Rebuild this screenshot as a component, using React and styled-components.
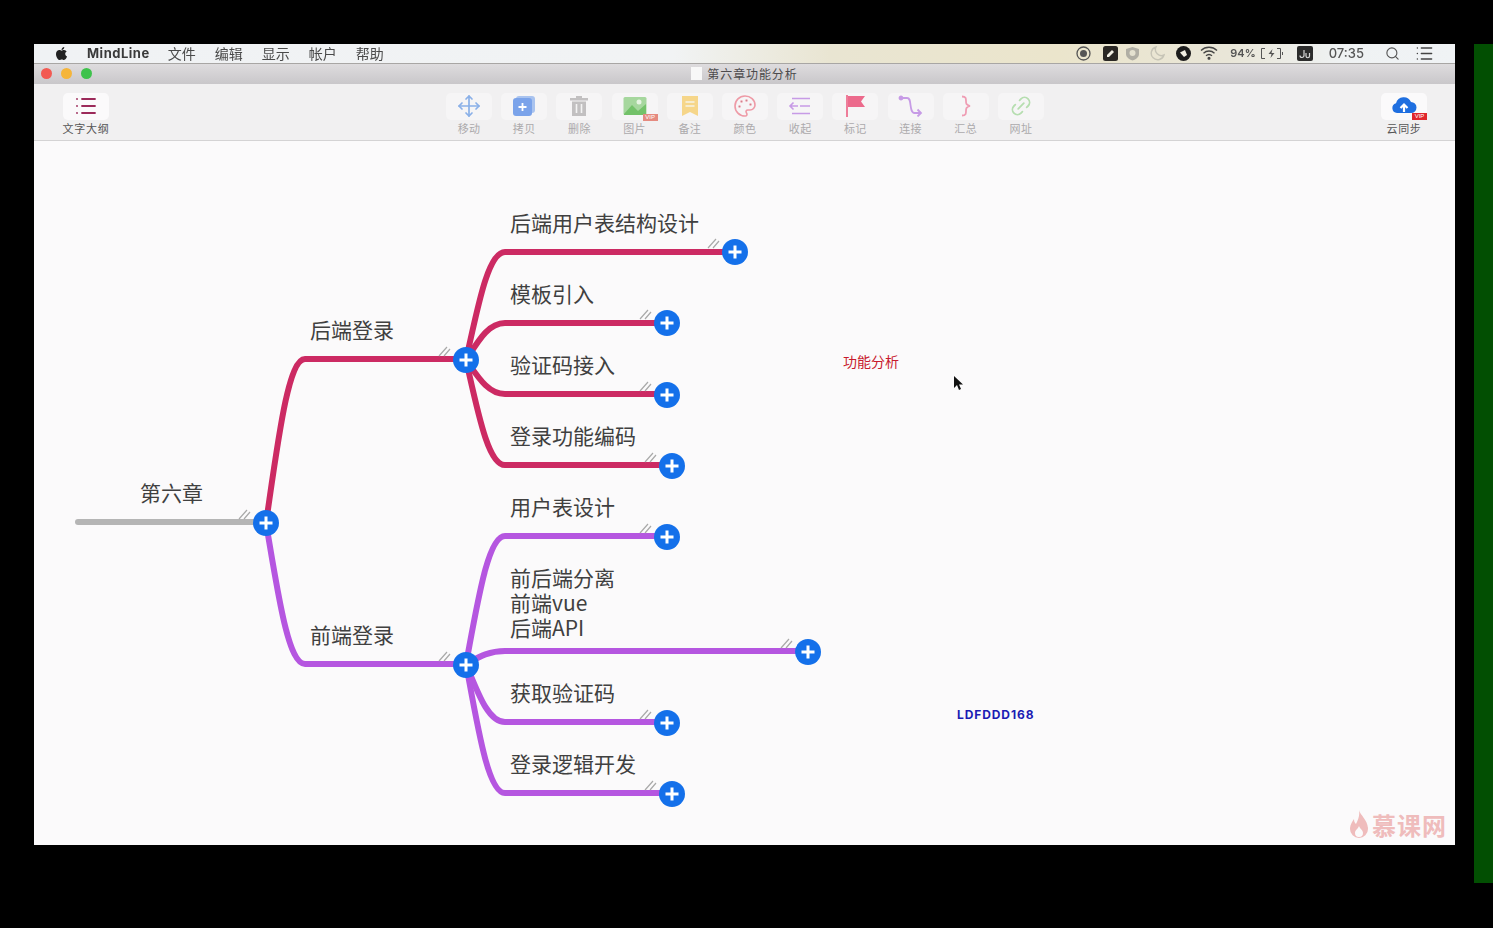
import styled, { createGlobalStyle } from "styled-components";
import { FaApple } from "react-icons/fa";
import { List, Move, Palette, Link2, Search } from "lucide-react";

const GlobalStyle = createGlobalStyle`
    html, body {
        margin: 0;
        height: 100%;
        background: #000;
        overflow: hidden;
    }
    body {
        font-family: "Noto Sans CJK SC", "Noto Sans", sans-serif;
    }
`;

const Screen = styled.div`
    display: flex;
    align-items: flex-start;
    padding: 44px 0 0 34px;
    height: 928px;
    box-sizing: border-box;
`;

const Window = styled.div`
    width: 1421px;
    height: 801px;
    display: flex;
    flex-direction: column;
    filter: blur(0.6px);
`;

const GreenBar = styled.div`
    width: 19px;
    height: 839px;
    margin-left: 19px;
    background: #024f02;
`;

const MenuBar = styled.div`
    height: 20px;
    flex: none;
    display: flex;
    align-items: center;
    padding: 0 0 1px 20px;
    background: linear-gradient(90deg, #f0f2f4 0%, #f1f3f4 45%, #e9e5d2 56%, #ebe5cc 72%, #e9e6d8 84%, #eff2f3 92%, #f0f3f5 100%);
    border-bottom: 1px solid #a8a6a4;
    box-sizing: border-box;
`;

const AppleMark = styled(FaApple)`
    font-size: 15px;
    color: #222;
    margin-right: 18px;
`;

const AppName = styled.span`
    font-family: Inter, "Noto Sans", sans-serif;
    font-size: 13px;
    font-weight: 700;
    letter-spacing: 0.5px;
    color: #3a3a3a;
    margin-right: 18px;
`;

const MenuItem = styled.span`
    font-size: 14px;
    line-height: 18px;
    color: #4a4a4a;
    margin-right: 19px;
`;

const StatusArea = styled.div`
    margin-left: auto;
    padding-right: 21px;
    display: flex;
    align-items: center;
`;

const StatusSlot = styled.div`
    margin-left: ${p => p.$ml}px;
    display: flex;
    align-items: center;
    color: ${p => p.$color || "#333"};
`;

const StatusText = styled.span`
    font-family: Inter, "Noto Sans", sans-serif;
    font-size: ${p => p.$size}px;
    font-weight: ${p => p.$weight || 500};
    color: ${p => p.$color};
`;

const TitleBar = styled.div`
    height: 20px;
    flex: none;
    display: grid;
    grid-template-columns: 1fr auto 1fr;
    align-items: center;
    padding: 0 7px 1px;
    box-sizing: border-box;
    background: linear-gradient(180deg, #dedcde 0%, #c9c7ca 100%);
`;

const Lights = styled.div`
    display: flex;
    gap: 9px;
`;

const Light = styled.span`
    width: 11px;
    height: 11px;
    border-radius: 50%;
    background: ${p => p.$color};
`;

const WindowTitle = styled.div`
    display: flex;
    align-items: center;
    gap: 5px;
    font-size: 12px;
    letter-spacing: 0.9px;
    color: #4c4a4c;
`;

const DocIcon = styled.span`
    width: 11px;
    height: 13px;
    background: #f8f8f8;
`;

const Toolbar = styled.div`
    height: 57px;
    flex: none;
    display: flex;
    justify-content: space-between;
    padding: 9px 28px 0 29px;
    background: #f1f0f1;
    border-bottom: 1px solid #d4d3d4;
    box-sizing: border-box;
`;

const ToolGroup = styled.div`
    display: flex;
    gap: 9.2px;
`;

const Tool = styled.div`
    width: 46px;
    display: flex;
    flex-direction: column;
    align-items: center;
`;

const ToolFace = styled.div`
    position: relative;
    width: 46px;
    height: 27px;
    padding-bottom: 2px;
    box-sizing: border-box;
    display: flex;
    align-items: center;
    justify-content: center;
    border-radius: 5px;
    background: ${p => (p.$active ? "#fbfafb" : "#f6f5f6")};
`;

const ToolLabel = styled.span`
    margin-top: 1px;
    font-size: 11px;
    line-height: 14px;
    white-space: nowrap;
    letter-spacing: ${p => (p.$active ? "0.7px" : "0.4px")};
    color: ${p => (p.$active ? "#555" : "#acaaac")};
`;

const VipBadge = styled.span`
    position: absolute;
    right: ${p => p.$right}px;
    bottom: ${p => p.$bottom}px;
    width: 15px;
    height: 7px;
    background: ${p => p.$color};
    color: #fff;
    font-family: "Liberation Sans", sans-serif;
    font-size: 6px;
    line-height: 7px;
    text-align: center;
`;

const Canvas = styled.div`
    position: relative;
    flex: 1;
    background: #fbfafb;
    overflow: hidden;
`;

const MapLines = styled.svg`
    position: absolute;
    left: 0;
    top: 0;
`;

const NodeLabel = styled.div`
    position: absolute;
    left: ${p => p.$x - 34}px;
    top: ${p => p.$y - 141 - 14}px;
    font-size: 21px;
    line-height: 25px;
    white-space: pre;
    color: #404040;
`;

const FloatText = styled.div`
    position: absolute;
    left: ${p => p.$x - 34}px;
    top: ${p => p.$y - 141 - 10}px;
    font-family: ${p => (p.$latin ? 'Inter, "Noto Sans", sans-serif' : "inherit")};
    font-size: ${p => p.$size}px;
    font-weight: ${p => p.$weight};
    letter-spacing: ${p => (p.$latin ? "0.9px" : "0")};
    line-height: 20px;
    color: ${p => p.$color};
    white-space: nowrap;
`;

const Cursor = styled.svg`
    position: absolute;
    left: ${953 - 34}px;
    top: ${375 - 141}px;
`;

const Watermark = styled.div`
    position: absolute;
    right: 8px;
    bottom: 5px;
    display: flex;
    align-items: center;
    gap: 3px;
    font-size: 24px;
    font-weight: 700;
    line-height: 30px;
    letter-spacing: 1px;
    color: #efbcbc;
`;

const RED = "#cc2a63";
const PURPLE = "#b556e0";

// page coordinates, the svg viewBox maps them onto the canvas
const branches = [
    { from: [266, 523], to: [466, 359], color: RED },
    { from: [466, 360], to: [735, 252], color: RED },
    { from: [466, 360], to: [667, 323], color: RED },
    { from: [466, 360], to: [667, 394], color: RED },
    { from: [466, 360], to: [672, 465], color: RED },
    { from: [266, 523], to: [466, 664], color: PURPLE },
    { from: [466, 664], to: [667, 536], color: PURPLE },
    { from: [466, 664], to: [808, 651], color: PURPLE },
    { from: [466, 664], to: [667, 722], color: PURPLE },
    { from: [466, 664], to: [672, 793], color: PURPLE },
];

const labels = [
    { x: 140, y: 494, text: "第六章" },
    { x: 310, y: 331, text: "后端登录" },
    { x: 310, y: 636, text: "前端登录" },
    { x: 510, y: 224, text: "后端用户表结构设计" },
    { x: 510, y: 295, text: "模板引入" },
    { x: 510, y: 366, text: "验证码接入" },
    { x: 510, y: 437, text: "登录功能编码" },
    { x: 510, y: 508, text: "用户表设计" },
    { x: 510, y: 579, text: "前后端分离\n前端vue\n后端API" },
    { x: 510, y: 694, text: "获取验证码" },
    { x: 510, y: 765, text: "登录逻辑开发" },
];

const edgePath = ({ from, to }) => {
    const [x, y] = from;
    const [tx, ty] = to;
    const midY = y + (ty - y) * 0.5;
    return `M${x} ${y} C${x + 12} ${midY} ${x + 22} ${ty} ${x + 39} ${ty} L${tx} ${ty}`;
};

const Expander = ({ x, y }) => (
    <g>
        <path d={`M${x - 27} ${y - 4} l8 -9 M${x - 22} ${y - 4} l6 -7`} stroke="#a9a9a9" strokeWidth="1.2" fill="none" />
        <circle cx={x} cy={y} r="13" fill="#1470ea" />
        <path d={`M${x - 6.5} ${y} h13 M${x} ${y - 6.5} v13`} stroke="#fff" strokeWidth="3" />
    </g>
);

const MindMap = () => (
    <MapLines width="1421" height="704" viewBox="34 141 1421 704">
        <path d="M78 522 L266 522" stroke="#b5b5b5" strokeWidth="6" fill="none" strokeLinecap="round" />
        {branches.map((b, i) => (
            <path key={i} d={edgePath(b)} stroke={b.color} strokeWidth="6" fill="none" />
        ))}
        <Expander x={266} y={523} />
        <Expander x={466} y={360} />
        <Expander x={466} y={665} />
        <Expander x={735} y={252} />
        <Expander x={667} y={323} />
        <Expander x={667} y={395} />
        <Expander x={672} y={466} />
        <Expander x={667} y={537} />
        <Expander x={808} y={652} />
        <Expander x={667} y={723} />
        <Expander x={672} y={794} />
    </MapLines>
);

const CopyIcon = () => (
    <svg width="24" height="22" viewBox="0 0 24 22">
        <rect x="4" y="1" width="19" height="17" rx="3" fill="#a9c3ef" />
        <rect x="1" y="3" width="19" height="18" rx="3" fill="#7ba3ea" />
        <path d="M10.5 8v8M6.500 12h8" stroke="#fff" strokeWidth="1.8" />
    </svg>
);

const TrashIcon = () => (
    <svg width="22" height="22" viewBox="0 0 22 22" fill="#c2c0c1">
        <rect x="2" y="3" width="18" height="2.500" />
        <rect x="8" y="1" width="6" height="2" />
        <path d="M4 6.500h14V21H4z" />
        <path d="M8.500 9v9M13.500 9v9" stroke="#f4f3f4" strokeWidth="1.600" />
    </svg>
);

const ImageIcon = () => (
    <svg width="24" height="20" viewBox="0 0 24 20">
        <rect x="0.500" y="1" width="23" height="18" rx="1.500" fill="#a6d79e" />
        <path d="M1 18 L9 9 L15 15 L23 8 V19 H1z" fill="#74c26a" />
        <circle cx="16" cy="6" r="2.500" fill="#e6f4e2" />
    </svg>
);

const NoteIcon = () => (
    <svg width="18" height="22" viewBox="0 0 18 22">
        <path d="M1 1h16v20l-8-4-8 4z" fill="#f6d68a" />
        <path d="M4.500 7h9M4.500 11h9" stroke="#f6f3e6" strokeWidth="1.500" />
    </svg>
);

const CollapseIcon = () => (
    <svg width="24" height="20" viewBox="0 0 24 20" fill="none" stroke="#c79be6" strokeWidth="1.600">
        <path d="M4 2.500h18M12 10h10M4 17.500h18" />
        <path d="M10 10H2M5.500 6.500 2 10l3.500 3.500" />
    </svg>
);

const FlagIcon = () => (
    <svg width="22" height="24" viewBox="0 0 22 24">
        <path d="M2 1h2v22H2z" fill="#ee7d9a" />
        <path d="M4 2h17l-4 5.500 4 5.500H4z" fill="#ec6a8c" />
    </svg>
);

const ConnectIcon = () => (
    <svg width="26" height="22" viewBox="0 0 26 22" fill="none" stroke="#c79be6" strokeWidth="1.800">
        <circle cx="3" cy="3" r="1.500" fill="#c79be6" />
        <path d="M4 3h5c3 0 3 3 3.500 7s1 8 4 8h6" />
        <path d="M19.500 14.500 23 18l-3.500 3.500" />
    </svg>
);

const BraceIcon = () => (
    <svg width="14" height="22" viewBox="0 0 14 22" fill="none" stroke="#ef9db4" strokeWidth="1.800">
        <path d="M3 1.500c4 0 4 2 4 4.500s0 4 4 5c-4 1-4 2.500-4 5s0 4.500-4 4.500" />
    </svg>
);

const CloudIcon = () => (
    <svg width="26" height="20" viewBox="0 0 26 20">
        <path d="M6 17a5 5 0 0 1-1-9.800A8 8 0 0 1 20 6a5.500 5.500 0 0 1 0 11z" fill="#1f6fe0" />
        <path d="M13 16V9M9.500 12 13 8.500l3.500 3.500" stroke="#fff" strokeWidth="2.200" fill="none" />
    </svg>
);

const tools = [
    { label: "移动", icon: <Move size={24} color="#8ab0e8" strokeWidth={1.7} /> },
    { label: "拷贝", icon: <CopyIcon /> },
    { label: "删除", icon: <TrashIcon /> },
    { label: "图片", icon: <ImageIcon />, vip: true },
    { label: "备注", icon: <NoteIcon /> },
    { label: "颜色", icon: <Palette size={24} color="#ee9aa6" strokeWidth={1.6} /> },
    { label: "收起", icon: <CollapseIcon /> },
    { label: "标记", icon: <FlagIcon /> },
    { label: "连接", icon: <ConnectIcon /> },
    { label: "汇总", icon: <BraceIcon /> },
    { label: "网址", icon: <Link2 size={24} color="#b6deb0" strokeWidth={1.8} transform="rotate(-45)" /> },
];

const StatusIcons = () => (
    <StatusArea>
        <StatusSlot $ml={0}>
            <svg width="15" height="15" viewBox="0 0 15 15"><circle cx="7.500" cy="7.500" r="6.500" fill="none" stroke="#555" strokeWidth="1.300" /><circle cx="7.500" cy="7.500" r="3.500" fill="#555" /></svg>
        </StatusSlot>
        <StatusSlot $ml={12}>
            <svg width="15" height="15" viewBox="0 0 15 15"><rect width="15" height="15" rx="2.500" fill="#2a2724" /><path d="M4 9 9 4l2 2-5 5H4z" fill="#f2efe4" /></svg>
        </StatusSlot>
        <StatusSlot $ml={7}>
            <svg width="15" height="15" viewBox="0 0 15 15"><path d="M7.500 1 14 3v5c0 3-3 5.500-6.500 6.500C4 13.500 1 11 1 8V3z" fill="#b0aea4" /><circle cx="7.500" cy="7" r="3" fill="#e4e1d0" /></svg>
        </StatusSlot>
        <StatusSlot $ml={9}>
            <svg width="16" height="15" viewBox="0 0 16 15"><path d="M7 1a6.500 6.500 0 1 0 8 8A6 6 0 0 1 7 1z" fill="none" stroke="#c6c4b6" strokeWidth="1.400" /></svg>
        </StatusSlot>
        <StatusSlot $ml={11}>
            <svg width="15" height="15" viewBox="0 0 15 15"><circle cx="7.500" cy="7.500" r="7.500" fill="#1c1c1c" /><path d="M4 6.500 9 4l2 5-3 2z" fill="#f2efe4" /></svg>
        </StatusSlot>
        <StatusSlot $ml={9}>
            <svg width="18" height="14" viewBox="0 0 18 14" fill="none" stroke="#444" strokeWidth="1.300"><path d="M1 4.500a11.500 11.500 0 0 1 16 0M3.500 7.200a8 8 0 0 1 11 0M6 9.800a4.500 4.500 0 0 1 6 0" /><circle cx="9" cy="12.300" r="0.900" fill="#444" /></svg>
        </StatusSlot>
        <StatusSlot $ml={12}>
            <StatusText $size={11} $weight={600} $color="#555">94%</StatusText>
        </StatusSlot>
        <StatusSlot $ml={5}>
            <svg width="23" height="11" viewBox="0 0 23 11" fill="none" stroke="#555" strokeWidth="1"><path d="M4 .500H.500v10H4M16 .500h3.500v10H16M21.500 4v3" /><path d="M11.500 1 7.500 6h3l-1 4 4-5h-3z" fill="#555" stroke="none" /></svg>
        </StatusSlot>
        <StatusSlot $ml={13}>
            <svg width="16" height="15" viewBox="0 0 16 15"><rect width="16" height="15" rx="2" fill="#2c2c2c" /><path d="M3 9.500a2 2 0 1 0 4 0V4M9 7v3a1.500 1.500 0 0 0 3.500 0V7" fill="none" stroke="#d8d8d8" strokeWidth="1.200" /></svg>
        </StatusSlot>
        <StatusSlot $ml={16}>
            <StatusText $size={13} $color="#555">07:35</StatusText>
        </StatusSlot>
        <StatusSlot $ml={21} $color="#555">
            <Search size={15} strokeWidth={1.8} />
        </StatusSlot>
        <StatusSlot $ml={15} $color="#444">
            <List size={19} strokeWidth={1.8} />
        </StatusSlot>
    </StatusArea>
);

export default function App() {
    return (
        <Screen>
            <GlobalStyle />
            <Window>
                <MenuBar>
                    <AppleMark />
                    <AppName>MindLine</AppName>
                    <MenuItem>文件</MenuItem>
                    <MenuItem>编辑</MenuItem>
                    <MenuItem>显示</MenuItem>
                    <MenuItem>帐户</MenuItem>
                    <MenuItem>帮助</MenuItem>
                    <StatusIcons />
                </MenuBar>
                <TitleBar>
                    <Lights>
                        <Light $color="#f25a52" />
                        <Light $color="#f5b53a" />
                        <Light $color="#3fc24c" />
                    </Lights>
                    <WindowTitle>
                        <DocIcon />
                        第六章功能分析
                    </WindowTitle>
                </TitleBar>
                <Toolbar>
                    <Tool>
                        <ToolFace $active>
                            <List size={24} color="#9c2a5a" strokeWidth={1.8} />
                        </ToolFace>
                        <ToolLabel $active>文字大纲</ToolLabel>
                    </Tool>
                    <ToolGroup>
                        {tools.map(tool => (
                            <Tool key={tool.label}>
                                <ToolFace>
                                    {tool.icon}
                                    {tool.vip && <VipBadge $right={0} $bottom={-1} $color="#e58a80">VIP</VipBadge>}
                                </ToolFace>
                                <ToolLabel>{tool.label}</ToolLabel>
                            </Tool>
                        ))}
                    </ToolGroup>
                    <Tool>
                        <ToolFace $active>
                            <CloudIcon />
                            <VipBadge $right={0} $bottom={0} $color="#e0262c">VIP</VipBadge>
                        </ToolFace>
                        <ToolLabel $active>云同步</ToolLabel>
                    </Tool>
                </Toolbar>
                <Canvas>
                    <MindMap />
                    {labels.map(label => (
                        <NodeLabel key={label.text} $x={label.x} $y={label.y}>{label.text}</NodeLabel>
                    ))}
                    <FloatText $x={843} $y={361} $size={14} $weight={400} $color="#c81a2e">功能分析</FloatText>
                    <FloatText $x={957} $y={715} $size={12} $weight={700} $color="#1c1cb4" $latin>LDFDDD168</FloatText>
                    <Cursor width="12" height="16" viewBox="0 0 12 16">
                        <path d="M1 1v12l3-3 2 5 2-1-2-4.500h4z" fill="#111" />
                    </Cursor>
                    <Watermark>
                        <svg width="20" height="30" viewBox="0 0 20 30">
                            <path d="M10 0c1 5 9 10 9 19a9 9 0 0 1-18 0c0-4 2-7 4-10 0 3 1 4 2 5 2-4 4-8 3-14z" fill="#efbcbc" />
                            <path d="M10 16c1 3 4 4 4 7a4 4 0 0 1-8 0c0-3 3-4 4-7z" fill="#fbfafb" />
                        </svg>
                        慕课网
                    </Watermark>
                </Canvas>
            </Window>
            <GreenBar />
        </Screen>
    );
}
